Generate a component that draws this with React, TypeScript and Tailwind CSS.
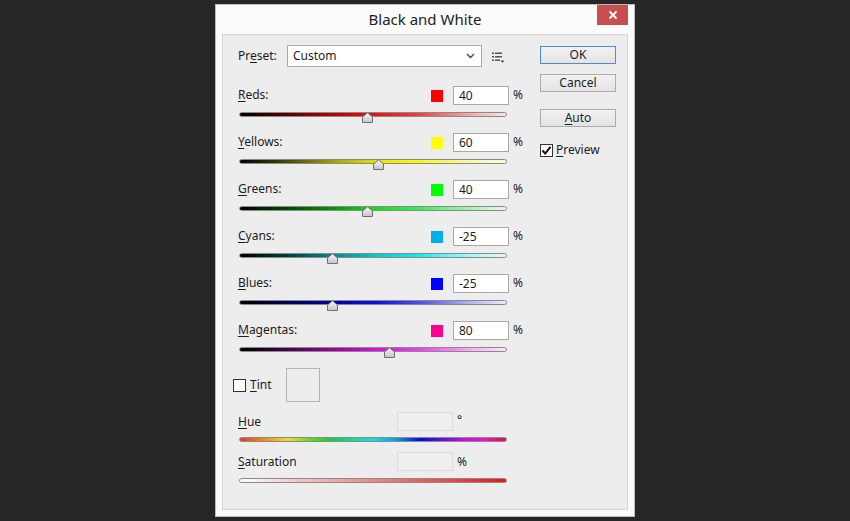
import React from "react";

type Row = { label: string; key: string; rest: string; color: string; value: number; grad: string };

const rows: Row[] = [
  { label: "Reds", key: "R", rest: "eds:", color: "#ff0000", value: 40, grad: "linear-gradient(to right,#000 0%,#5a0000 18%,#c00000 36%,#ee1010 50%,#f03838 66%,#f49a9a 84%,#f8e8e8 100%)" },
  { label: "Yellows", key: "Y", rest: "ellows:", color: "#ffff00", value: 60, grad: "linear-gradient(to right,#000 0%,#4a4a00 18%,#a8a800 36%,#e8e800 52%,#f8f810 66%,#fafaa0 86%,#fafae8 100%)" },
  { label: "Greens", key: "G", rest: "reens:", color: "#00ff00", value: 40, grad: "linear-gradient(to right,#000 0%,#004a00 18%,#00a000 36%,#10e010 50%,#30f050 66%,#a0f4b0 86%,#e8f8e8 100%)" },
  { label: "Cyans", key: "C", rest: "yans:", color: "#00aeef", value: -25, grad: "linear-gradient(to right,#000 0%,#004040 18%,#009090 36%,#00d0d0 52%,#10f0f0 68%,#a0f8f8 86%,#e8f8f8 100%)" },
  { label: "Blues", key: "B", rest: "lues:", color: "#0000ff", value: -25, grad: "linear-gradient(to right,#000 0%,#00005a 18%,#0000b0 36%,#1010e8 52%,#5050f0 68%,#b0b0f4 86%,#ececf8 100%)" },
  { label: "Magentas", key: "M", rest: "agentas:", color: "#ff0090", value: 80, grad: "linear-gradient(to right,#000 0%,#4a004a 18%,#a000a0 36%,#e010e0 52%,#f040f0 68%,#f8a8f8 86%,#f8e8f8 100%)" },
];

function Thumb({ value }: { value: number }) {
  const pct = (value + 200) / 500;
  return (
    <svg
      className="absolute top-[0px]"
      style={{ left: pct * 268 - 5.5 }}
      width="11"
      height="11"
      viewBox="0 0 11 11"
    >
      <defs>
        <linearGradient id="tg" x1="0" y1="0" x2="0" y2="1">
          <stop offset="0" stopColor="#fafafa" />
          <stop offset="1" stopColor="#c4c4c4" />
        </linearGradient>
      </defs>
      <path d="M0.5 10.5 V5 L5.5 0.8 L10.5 5 V10.5 Z" fill="url(#tg)" stroke="#707070" strokeWidth="1" />
    </svg>
  );
}

function Track({ grad, value, mt }: { grad: string; value?: number; mt: string }) {
  return (
    <div className={`relative ml-[6px] w-[268px] h-[5px] ${mt}`}>
      <div className="h-[5px] rounded-full border border-[#8a8a8a]" style={{ background: grad }} />
      {value !== undefined && <Thumb value={value} />}
    </div>
  );
}

function Check({ checked }: { checked?: boolean }) {
  return (
    <div className="w-[13px] h-[13px] border border-[#333] bg-white flex items-center justify-center">
      {checked && (
        <svg width="11" height="11" viewBox="0 0 11 11">
          <path d="M1.5 5.5 L4.2 8.5 L9.5 1.8" fill="none" stroke="#111" strokeWidth="2" />
        </svg>
      )}
    </div>
  );
}

function Btn({ children, primary }: { children: React.ReactNode; primary?: boolean }) {
  return (
    <div
      className={`w-[76px] h-[18px] flex items-center justify-center text-[12px] leading-none bg-gradient-to-b from-[#f2f2f2] to-[#e3e3e3] border ${
        primary ? "border-[#4a90d9]" : "border-[#ababab]"
      }`}
    >
      {children}
    </div>
  );
}

export default function App() {
  return (
    <div className="w-[850px] h-[521px] bg-[#262626] pt-[4px] pl-[215px] font-['Noto_Sans',sans-serif] text-[#1c1c1c]">
      <div className="relative w-[420px] h-[513px] border border-[#bcbcbc] bg-[#fbfbfb] flex flex-col">
        <div className="h-[29px] flex items-center justify-center text-[15px] text-[#222]">Black and White</div>
        <div className="absolute top-0 right-[6px] w-[31px] h-[20px] bg-[#c74f50] flex items-center justify-center">
          <svg width="10" height="10" viewBox="0 0 10 10">
            <path d="M1.5 1.5 L8.5 8.5 M8.5 1.5 L1.5 8.5" stroke="#fff" strokeWidth="1.8" />
          </svg>
        </div>
        <div className="mx-[6px] h-[476px] border border-[#d6d6d6] bg-[#ededed] flex">
          {/* left column */}
          <div className="ml-[10px] w-[291px] flex flex-col">
            <div className="mt-[10px] h-[22px] flex items-center">
              <div className="w-[54px] pl-[5px] text-[12px]">
                Pr<span className="underline underline-offset-2">e</span>set:
              </div>
              <div className="w-[195px] h-[22px] bg-white border border-[#a9a9a9] flex items-center pl-[5px] pr-[6px] text-[12px]">
                <span className="flex-1">Custom</span>
                <svg width="9" height="6" viewBox="0 0 9 6">
                  <path d="M1 1 L4.5 4.5 L8 1" fill="none" stroke="#444" strokeWidth="1.4" />
                </svg>
              </div>
              <svg className="ml-[10px] mt-[2px]" width="13" height="11" viewBox="0 0 13 11">
                <rect x="0" y="0.5" width="2" height="1.5" fill="#555" />
                <rect x="3" y="0.5" width="7" height="1.5" fill="#555" />
                <rect x="0" y="4" width="2" height="1.5" fill="#555" />
                <rect x="3" y="4" width="7" height="1.5" fill="#555" />
                <rect x="0" y="7.5" width="2" height="1.5" fill="#555" />
                <rect x="3" y="7.5" width="5" height="1.5" fill="#555" />
                <path d="M8.5 8.5 L12.5 8.5 L10.5 10.8 Z" fill="#444" />
              </svg>
            </div>

            <div className="mt-[19px] flex flex-col">
              {rows.map((r) => (
                <div key={r.label} className="h-[47px] flex flex-col">
                  <div className="h-[19px] flex items-center">
                    <div className="flex-1 pl-[5px] text-[12px] -mt-[1px]">
                      <span className="underline underline-offset-2">{r.key}</span>
                      {r.rest}
                    </div>
                    <div className="w-[12px] h-[12px]" style={{ background: r.color }} />
                    <div className="ml-[10px] w-[56px] h-[19px] bg-white border border-[#a8a8a8] flex items-center pl-[5px] text-[12px]">
                      {r.value}
                    </div>
                    <div className="w-[15px] pl-[4px] text-[12px] -mt-[1px]">%</div>
                  </div>
                  <Track grad={r.grad} value={r.value} mt="mt-[7px]" />
                </div>
              ))}
            </div>

            <div className="h-[34px] flex items-center">
              <Check />
              <div className="ml-[4px] w-[36px] text-[12px]">
                <span className="underline underline-offset-2">T</span>int
              </div>
              <div className="w-[34px] h-[34px] border border-[#b4b4b4]" />
            </div>

            <div className="mt-[10px] h-[40px] flex flex-col">
              <div className="h-[19px] flex items-center">
                <div className="flex-1 pl-[5px] text-[12px]">
                  <span className="underline underline-offset-2">H</span>ue
                </div>
                <div className="w-[56px] h-[19px] border border-[#dcdcdc] bg-[#eeeeee]" />
                <div className="w-[71px] pl-[4px] text-[12px] -mt-[4px]">°</div>
              </div>
              <Track
                grad="linear-gradient(to right,#e83a2a 0%,#f08020 8%,#f0e020 18%,#60e020 26%,#10d040 34%,#10e0a0 44%,#10e0e0 50%,#10a0f0 58%,#0010e0 68%,#6010e0 76%,#c010e0 84%,#f010d0 92%,#e01040 100%)"
                mt="mt-[6px]"
              />
            </div>
            <div className="h-[40px] flex flex-col">
              <div className="h-[19px] flex items-center">
                <div className="flex-1 pl-[5px] text-[12px]">
                  <span className="underline underline-offset-2">S</span>aturation
                </div>
                <div className="w-[56px] h-[19px] border border-[#dcdcdc] bg-[#eeeeee]" />
                <div className="w-[71px] pl-[4px] text-[12px]">%</div>
              </div>
              <Track
                grad="linear-gradient(to right,#ffffff 0%,#f4c8c8 20%,#ee9494 45%,#ec5a5a 70%,#e81818 100%)"
                mt="mt-[7px]"
              />
            </div>
          </div>

          {/* right column */}
          <div className="ml-[16px] w-[76px] flex flex-col">
            <div className="mt-[11px]">
              <Btn primary>OK</Btn>
            </div>
            <div className="mt-[10px]">
              <Btn>Cancel</Btn>
            </div>
            <div className="mt-[17px]">
              <Btn>
                <span className="underline underline-offset-2">A</span>uto
              </Btn>
            </div>
            <div className="mt-[14px] flex items-center">
              <Check checked />
              <div className="ml-[3px] text-[12px]">
                <span className="underline underline-offset-2">P</span>review
              </div>
            </div>
          </div>
        </div>
      </div>
    </div>
  );
}
